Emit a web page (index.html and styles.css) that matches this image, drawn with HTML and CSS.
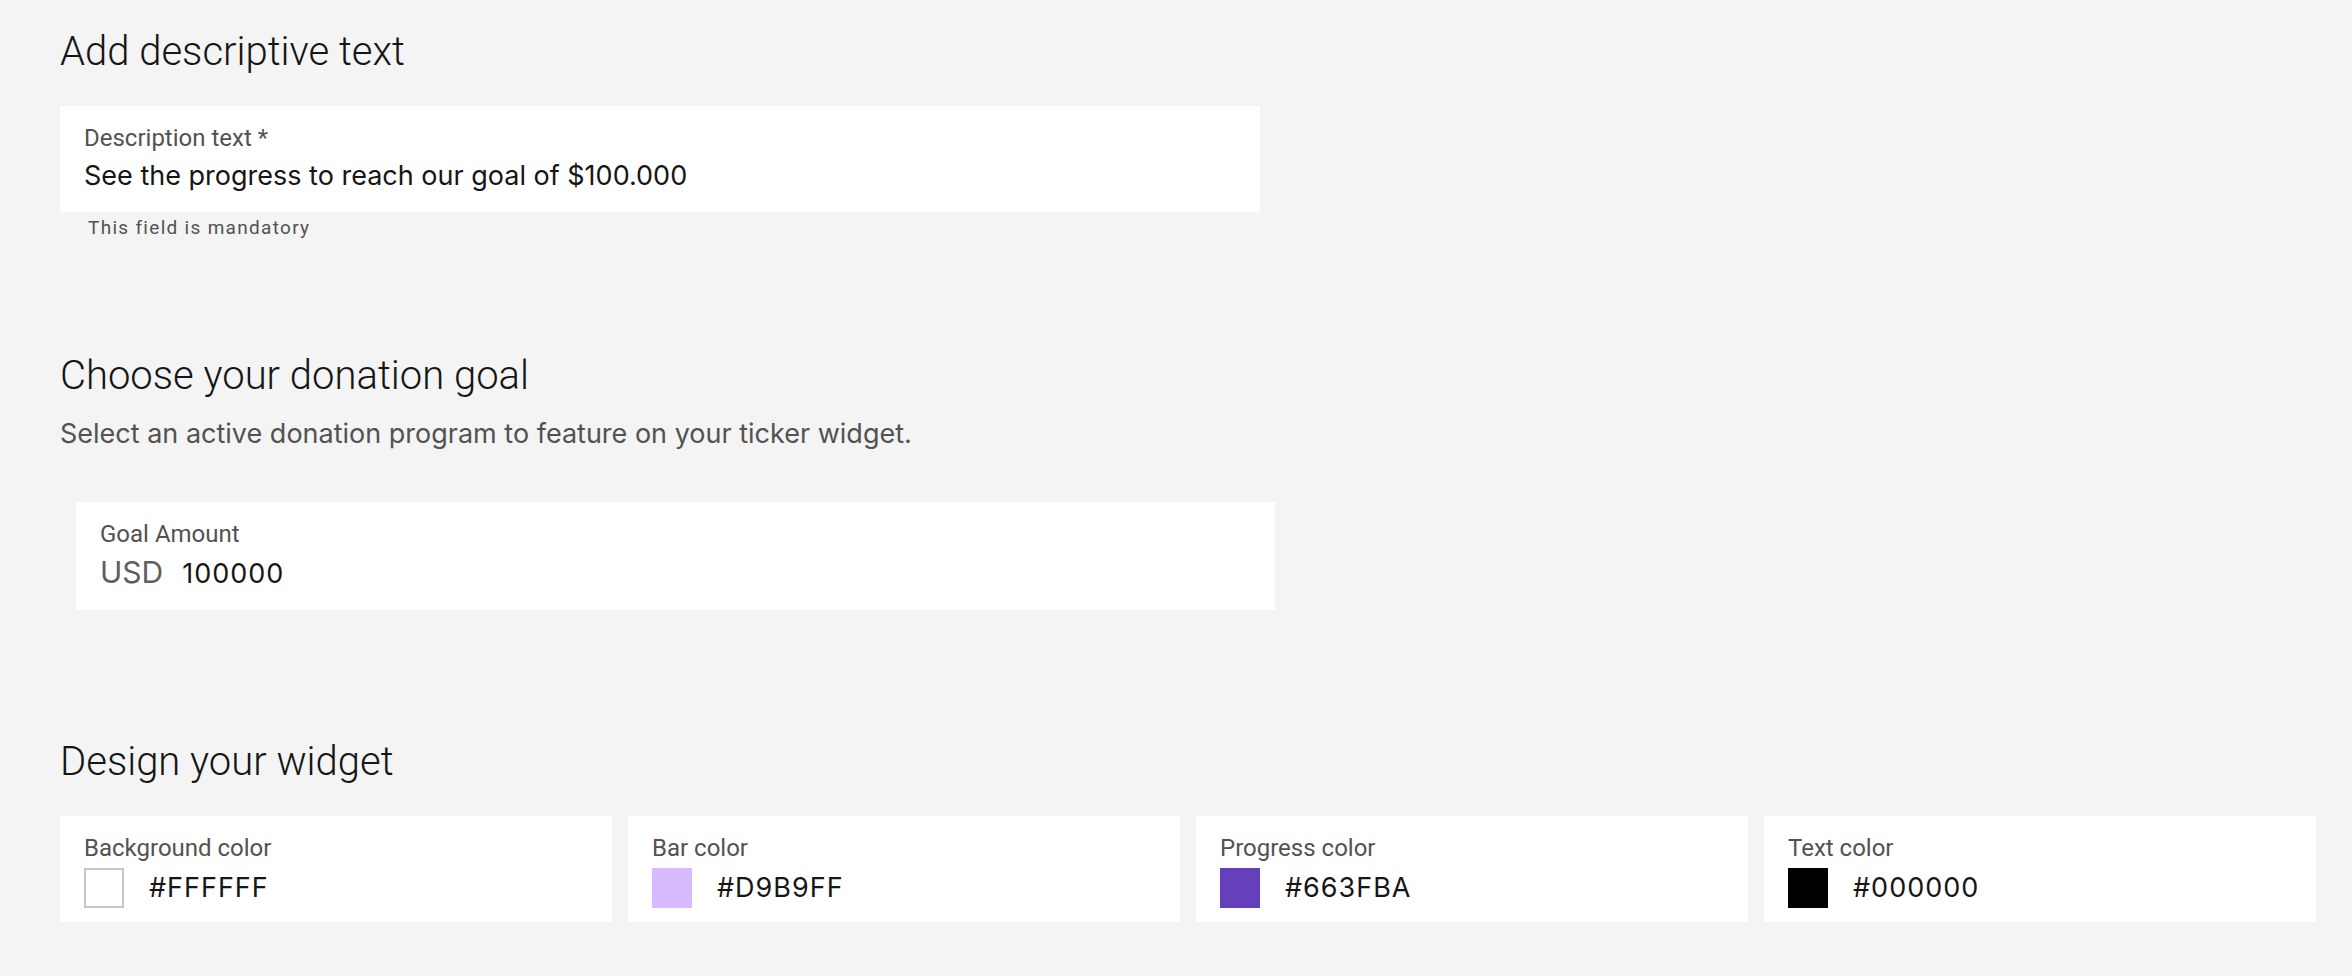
FILE: index.html
```html
<!DOCTYPE html>
<html lang="en">
<head>
    <meta charset="UTF-8">
    <meta name="viewport" content="width=device-width, initial-scale=1.0">
    <title>Ticker widget settings</title>
    <link rel="stylesheet" href="styles.css">
</head>
<body>
    <main class="page">
        <!-- Descriptive text -->
        <section class="section section-text">
            <h2 class="section-title">Add descriptive text</h2>
            <div class="field field-wide">
                <label class="field-label">Description text *</label>
                <div class="field-value">See the progress to reach our goal of $100.000</div>
            </div>
            <div class="field-helper">This field is mandatory</div>
        </section>

        <!-- Donation goal -->
        <section class="section section-goal">
            <h2 class="section-title">Choose your donation goal</h2>
            <p class="section-lead">Select an active donation program to feature on your ticker widget.</p>
            <div class="field field-goal">
                <label class="field-label">Goal Amount</label>
                <div class="amount">
                    <span class="currency">USD</span>
                    <span class="field-value field-code">100000</span>
                </div>
            </div>
        </section>

        <!-- Widget design -->
        <section class="section section-design">
            <h2 class="section-title">Design your widget</h2>
            <div class="color-grid">
                <div class="field color-card">
                    <label class="field-label">Background color</label>
                    <div class="color-row">
                        <span class="swatch swatch-white"></span>
                        <span class="field-value field-code">#FFFFFF</span>
                    </div>
                </div>
                <div class="field color-card">
                    <label class="field-label">Bar color</label>
                    <div class="color-row">
                        <span class="swatch swatch-bar"></span>
                        <span class="field-value field-code">#D9B9FF</span>
                    </div>
                </div>
                <div class="field color-card">
                    <label class="field-label">Progress color</label>
                    <div class="color-row">
                        <span class="swatch swatch-progress"></span>
                        <span class="field-value field-code">#663FBA</span>
                    </div>
                </div>
                <div class="field color-card">
                    <label class="field-label">Text color</label>
                    <div class="color-row">
                        <span class="swatch swatch-text"></span>
                        <span class="field-value field-code">#000000</span>
                    </div>
                </div>
            </div>
        </section>
    </main>
</body>
</html>
```

FILE: styles.css
```css
* {
    margin: 0;
    padding: 0;
    box-sizing: border-box;
}

body {
    font-family: Roboto, "Liberation Sans", Arial, sans-serif;
    background-color: #f4f4f4;
    color: #161616;
    height: 100vh;
    overflow: hidden;
}

.page {
    padding: 28px 36px 0 60px;
    display: flex;
    flex-direction: column;
}

.section {
    display: flex;
    flex-direction: column;
    align-items: flex-start;
}

.section-goal {
    margin-top: 112px;
}

.section-design {
    margin-top: 128px;
    align-items: stretch;
}

.section-title {
    font-family: Roboto, "Liberation Sans", sans-serif;
    font-weight: 300;
    font-size: 40px;
    line-height: 48px;
    color: #161616;
    margin-bottom: 30px;
}

.section-goal .section-title {
    margin-bottom: 18px;
}

.section-lead {
    font-family: Inter, "Liberation Sans", sans-serif;
    font-size: 27px;
    line-height: 32px;
    color: #525252;
    margin-bottom: 52px;
}

/* Input-like white boxes */
.field {
    background: #fff;
    padding: 17px 24px 18px;
    display: flex;
    flex-direction: column;
    gap: 5px;
}

.field-wide {
    width: 1200px;
}

.field-goal {
    width: 1199px;
    margin-left: 16px;
}

.field-label {
    font-family: Roboto, sans-serif;
    font-size: 24px;
    line-height: 30px;
    color: #525252;
}

.field-value {
    font-family: Inter, "Liberation Sans", sans-serif;
    font-size: 27px;
    line-height: 36px;
    color: #161616;
}

.field-code {
    letter-spacing: 1px;
}

.field-helper {
    font-family: Roboto, sans-serif;
    font-size: 19px;
    line-height: 24px;
    letter-spacing: 1.3px;
    color: #525252;
    margin: 4px 0 0 28px;
}

.amount {
    display: flex;
    align-items: baseline;
    gap: 19px;
}

.currency {
    font-family: Inter, Roboto, sans-serif;
    font-size: 30px;
    line-height: 36px;
    color: #5e5e5e;
}

/* Colour pickers */
.color-grid {
    display: grid;
    grid-template-columns: repeat(4, 1fr);
    gap: 16px;
}

.color-card {
    padding-bottom: 14px;
}

.color-row {
    display: flex;
    align-items: center;
    gap: 25px;
    height: 40px;
}

.swatch {
    width: 40px;
    height: 40px;
    flex-shrink: 0;
}

.swatch-white {
    background: #fff;
    border: 2px solid #c6c6c6;
}

.swatch-bar {
    background: #d9b9ff;
}

.swatch-progress {
    background: #663fba;
}

.swatch-text {
    background: #000;
}
```
